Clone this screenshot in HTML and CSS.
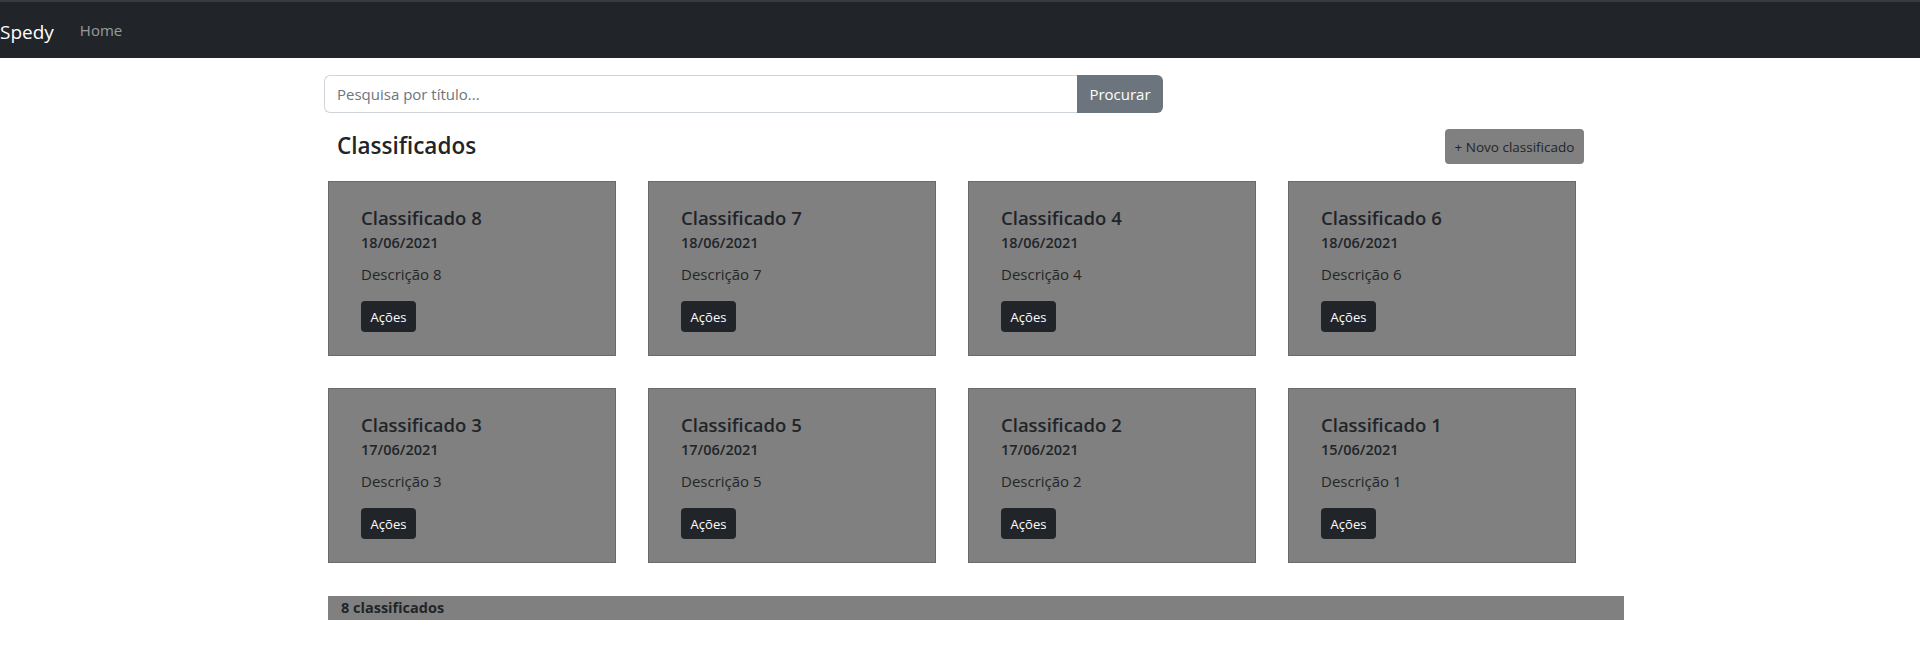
FILE: index.html
```html
<!DOCTYPE html>
<html lang="pt-BR">
<head>
<meta charset="utf-8">
<title>Spedy - Classificados</title>
<link rel="stylesheet" href="styles.css">
</head>
<body>
<nav class="navbar">
  <a class="brand" href="#">Spedy</a>
  <a class="nav-link" href="#">Home</a>
</nav>
<main class="page">
  <form class="search">
    <input class="search-input" type="text" placeholder="Pesquisa por título...">
    <button class="search-btn" type="button">Procurar</button>
  </form>
  <div class="header-row">
    <h4 class="heading">Classificados</h4>
    <button class="new-btn" type="button">+ Novo classificado</button>
  </div>
  <div class="grid">
    <div class="card"><h5 class="card-title">Classificado 8</h5><h6 class="card-date">18/06/2021</h6><p class="card-text">Descrição 8</p><button class="act-btn" type="button">Ações</button></div>
    <div class="card"><h5 class="card-title">Classificado 7</h5><h6 class="card-date">18/06/2021</h6><p class="card-text">Descrição 7</p><button class="act-btn" type="button">Ações</button></div>
    <div class="card"><h5 class="card-title">Classificado 4</h5><h6 class="card-date">18/06/2021</h6><p class="card-text">Descrição 4</p><button class="act-btn" type="button">Ações</button></div>
    <div class="card"><h5 class="card-title">Classificado 6</h5><h6 class="card-date">18/06/2021</h6><p class="card-text">Descrição 6</p><button class="act-btn" type="button">Ações</button></div>
    <div class="card"><h5 class="card-title">Classificado 3</h5><h6 class="card-date">17/06/2021</h6><p class="card-text">Descrição 3</p><button class="act-btn" type="button">Ações</button></div>
    <div class="card"><h5 class="card-title">Classificado 5</h5><h6 class="card-date">17/06/2021</h6><p class="card-text">Descrição 5</p><button class="act-btn" type="button">Ações</button></div>
    <div class="card"><h5 class="card-title">Classificado 2</h5><h6 class="card-date">17/06/2021</h6><p class="card-text">Descrição 2</p><button class="act-btn" type="button">Ações</button></div>
    <div class="card"><h5 class="card-title">Classificado 1</h5><h6 class="card-date">15/06/2021</h6><p class="card-text">Descrição 1</p><button class="act-btn" type="button">Ações</button></div>
  </div>
  <div class="footer-bar">8 classificados</div>
</main>
</body>
</html>
```

FILE: styles.css
```css
* { box-sizing: border-box; }
html, body { margin: 0; padding: 0; }
body {
  font-family: "Open Sans", "Noto Sans", "Liberation Sans", sans-serif;
  color: #212529;
  background: #fff;
  font-size: 15px;
}

.navbar {
  height: 58px;
  background: #212529;
  border-top: 2px solid #383c40;
  display: flex;
  align-items: center;
}
.brand {
  color: #fff;
  font-size: 19px;
  line-height: 30px;
  text-decoration: none;
  margin-top: 4px;
}
.nav-link {
  color: rgba(255,255,255,.55);
  font-size: 15px;
  line-height: 24px;
  text-decoration: none;
  margin-left: 26px;
}

.page {
  width: 1296px;
  margin-left: calc(50% - 632px);
}

.search {
  display: flex;
  width: 839px;
  margin: 17px 0 0 -4px;
  height: 38px;
}
.search-input {
  flex: 1;
  height: 38px;
  border: 1px solid #ced4da;
  border-right: none;
  border-radius: 6px 0 0 6px;
  padding: 0 12px;
  font-family: inherit;
  font-size: 15px;
  color: #212529;
  outline: none;
}
.search-input::placeholder { color: #6c757d; }
.search-btn {
  width: 86px;
  height: 38px;
  border: none;
  border-radius: 0 6px 6px 0;
  background: #6c757d;
  color: #fff;
  font-family: inherit;
  font-size: 15px;
  padding: 0;
}

.header-row {
  display: flex;
  align-items: center;
  justify-content: space-between;
  margin-top: 16px;
  height: 35px;
  padding-left: 9px;
  padding-right: 40px;
}
.heading {
  margin: 0 0 2px;
  font-size: 22.5px;
  font-weight: 600;
  line-height: 30px;
}
.new-btn {
  width: 139px;
  height: 35px;
  border: none;
  border-radius: 4px;
  background: #808080;
  color: #212529;
  font-family: inherit;
  font-size: 13.5px;
  padding: 0;
}

.grid {
  margin-top: 17px;
  display: grid;
  grid-template-columns: repeat(4, 288px);
  grid-auto-rows: 175px;
  column-gap: 32px;
  row-gap: 32px;
}
.card {
  background: #808080;
  border: 1px solid #6a6a6a;
  padding: 24px 32px 23px;
  display: flex;
  flex-direction: column;
  align-items: flex-start;
}
.card-title {
  margin: 0;
  font-size: 18.5px;
  font-weight: 600;
  line-height: 24px;
}
.card-date {
  margin: 3px 0 0;
  font-size: 14.5px;
  font-weight: 600;
  line-height: 20px;
}
.card-text {
  margin: 9px 0 0;
  font-size: 15px;
  line-height: 24px;
  color: #262626;
}
.act-btn {
  margin-top: 15px;
  height: 31px;
  width: 55px;
  padding: 0;
  border: none;
  border-radius: 4px;
  background: #212529;
  color: #fff;
  font-family: inherit;
  font-size: 13px;
}

.footer-bar {
  margin-top: 33px;
  height: 24px;
  background: #808080;
  padding-left: 13px;
  font-size: 14.5px;
  font-weight: 700;
  line-height: 24px;
}
```
